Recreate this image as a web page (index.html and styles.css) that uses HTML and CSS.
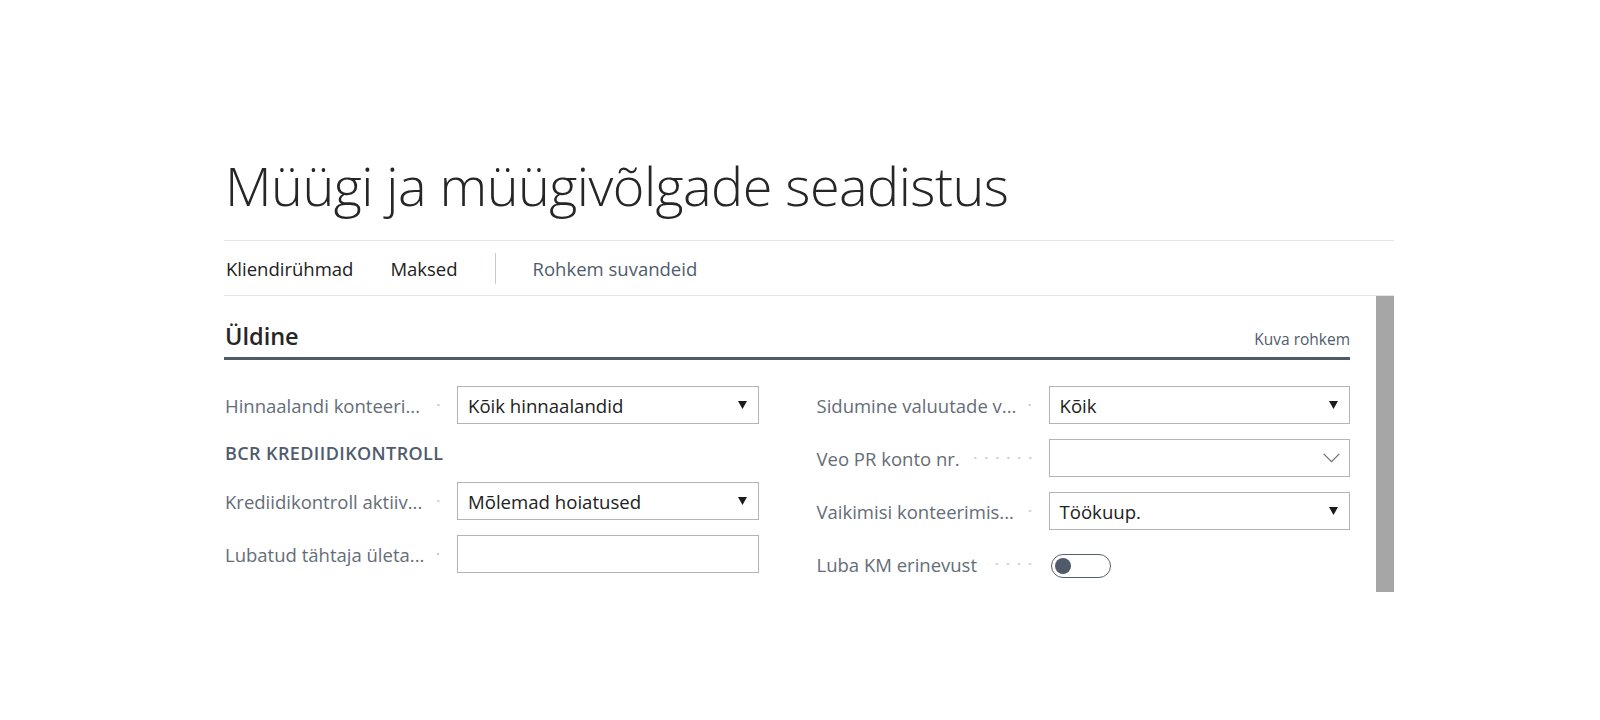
FILE: index.html
```html
<!DOCTYPE html>
<html lang="et">
<head>
<meta charset="utf-8">
<title>Müügi ja müügivõlgade seadistus</title>
<link rel="stylesheet" href="styles.css">
</head>
<body>
<div class="page">
  <h1 class="title">Müügi ja müügivõlgade seadistus</h1>
  <nav class="actionbar">
    <span class="action">Kliendirühmad</span>
    <span class="action">Maksed</span>
    <span class="sep"></span>
    <span class="action more">Rohkem suvandeid</span>
  </nav>
  <div class="content">
    <div class="main">
      <div class="section-head">
        <span class="section-title">Üldine</span>
        <span class="show-more">Kuva rohkem</span>
      </div>
      <div class="fields">
        <div class="col">
          <div class="field">
            <div class="label"><span class="ltext">Hinnaalandi konteeri...</span><span class="leader"></span></div>
            <div class="box select"><span class="val">Kõik hinnaalandid</span><svg class="tri" width="9" height="8" viewBox="0 0 9 8"><path d="M0 0H9L4.5 8Z" fill="#1b1b1b"/></svg></div>
          </div>
          <div class="group">BCR KREDIIDIKONTROLL</div>
          <div class="field">
            <div class="label"><span class="ltext">Krediidikontroll aktiiv...</span><span class="leader"></span></div>
            <div class="box select"><span class="val">Mõlemad hoiatused</span><svg class="tri" width="9" height="8" viewBox="0 0 9 8"><path d="M0 0H9L4.5 8Z" fill="#1b1b1b"/></svg></div>
          </div>
          <div class="field">
            <div class="label"><span class="ltext">Lubatud tähtaja ületa...</span><span class="leader"></span></div>
            <div class="box"></div>
          </div>
        </div>
        <div class="col">
          <div class="field">
            <div class="label"><span class="ltext">Sidumine valuutade v...</span><span class="leader"></span></div>
            <div class="box select"><span class="val">Kõik</span><svg class="tri" width="9" height="8" viewBox="0 0 9 8"><path d="M0 0H9L4.5 8Z" fill="#1b1b1b"/></svg></div>
          </div>
          <div class="field">
            <div class="label"><span class="ltext">Veo PR konto nr.</span><span class="leader"></span></div>
            <div class="box select"><span class="val"></span><svg class="chev" width="17" height="10" viewBox="0 0 17 10"><path d="M0.7 0.8L8.5 8.6L16.3 0.8" fill="none" stroke="#6d6d6d" stroke-width="1.2"/></svg></div>
          </div>
          <div class="field">
            <div class="label"><span class="ltext">Vaikimisi konteerimis...</span><span class="leader"></span></div>
            <div class="box select"><span class="val">Töökuup.</span><svg class="tri" width="9" height="8" viewBox="0 0 9 8"><path d="M0 0H9L4.5 8Z" fill="#1b1b1b"/></svg></div>
          </div>
          <div class="field">
            <div class="label"><span class="ltext">Luba KM erinevust</span><span class="leader"></span></div>
            <div class="plain"><span class="toggle"><span class="knob"></span></span></div>
          </div>
        </div>
      </div>
    </div>
    <div class="scrollbar"></div>
  </div>
</div>
</body>
</html>
```

FILE: styles.css
```css
* { box-sizing: border-box; }
html, body { margin: 0; padding: 0; background: #ffffff; }
body {
  font-family: "Open Sans", "Noto Sans", sans-serif;
  color: #212121;
}
.page {
  width: 1170px;
  margin-left: 224px;
  padding-top: 153px;
}
.title {
  margin: 0 0 23px 0;
  font-weight: 300;
  font-size: 54px;
  line-height: 64px;
  color: #262626;
  padding-left: 1px;
  letter-spacing: -0.55px;
}
.actionbar {
  display: flex;
  align-items: center;
  gap: 37px;
  height: 56px;
  border-top: 1px solid #e1e4e8;
  border-bottom: 1px solid #e1e4e8;
  padding-left: 2px;
  font-size: 18.5px;
}
.action { color: #212121; white-space: nowrap; }
.action.more { color: #505c6d; }
.sep {
  width: 1px;
  height: 31px;
  background: #c5cbd2;
}
.content {
  display: flex;
}
.main {
  flex: 1;
  padding-right: 26px;
}
.scrollbar {
  flex: 0 0 18px;
  height: 296px;
  background: #a6a6a6;
}
.section-head {
  display: flex;
  justify-content: space-between;
  align-items: baseline;
  padding-top: 24px;
  padding-bottom: 5px;
  border-bottom: 3px solid #4f5a6a;
}
.section-title {
  font-size: 23.5px;
  line-height: 32px;
  font-weight: 600;
  color: #262626;
  padding-left: 1px;
}
.show-more {
  font-size: 15.5px;
  color: #505c6d;
}
.fields {
  display: grid;
  grid-template-columns: 1fr 1fr;
  column-gap: 57px;
  padding-top: 26px;
}
.col {
  display: flex;
  flex-direction: column;
  gap: 15px;
}
.field {
  display: flex;
  height: 38px;
  align-items: center;
}
.label {
  flex: 0 0 233px;
  display: flex;
  align-items: center;
  padding-right: 13px;
  padding-left: 1px;
  font-size: 18.5px;
  color: #646d78;
  min-width: 0;
}
.ltext {
  flex: 0 0 auto;
  white-space: nowrap;
}
.leader {
  flex: 1;
  min-width: 6px;
  height: 4px;
  margin-left: 10px;
  background-image: radial-gradient(circle, #c6c6c6 0.9px, transparent 1.3px);
  background-size: 11px 4px;
  background-repeat: repeat-x;
  background-position: right center;
}
.box {
  flex: 1;
  height: 38px;
  border: 1px solid #b4b4b4;
  display: flex;
  align-items: center;
  padding: 0 11px 0 10px;
  font-size: 18.6px;
  color: #212121;
}
.val { flex: 1; white-space: nowrap; }
.tri { flex: 0 0 auto; }
.chev { flex: 0 0 auto; margin-right: -2px; }
.plain {
  flex: 1;
  display: flex;
  align-items: center;
  height: 38px;
  padding-left: 2px;
}
.toggle {
  width: 60px;
  height: 24px;
  border: 1.5px solid #56606e;
  border-radius: 12px;
  display: flex;
  align-items: center;
  padding-left: 3px;
  margin-top: 4px;
}
.knob {
  width: 16px;
  height: 16px;
  border-radius: 50%;
  background: #4f5a6a;
}
.group {
  height: 28px;
  display: flex;
  align-items: center;
  padding-left: 1px;
  font-size: 18px;
  font-weight: 600;
  color: #505c6d;
  letter-spacing: 0.4px;
}
```
